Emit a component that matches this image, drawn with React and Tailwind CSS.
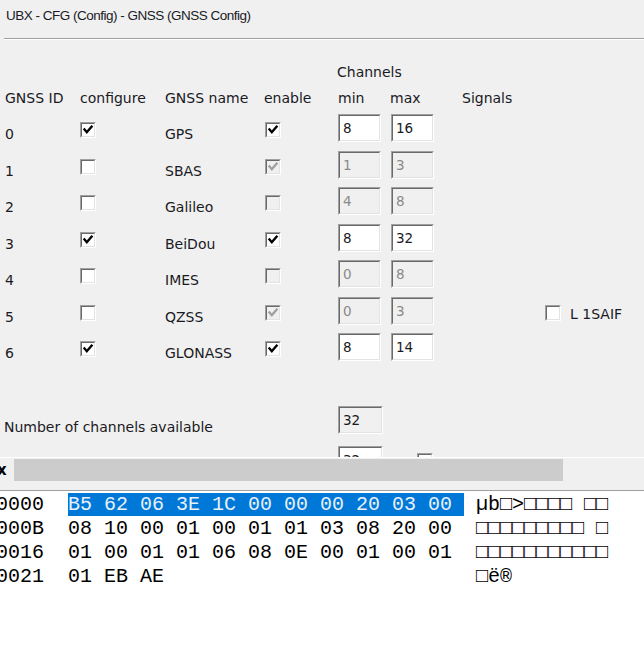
import React from "react";

function Check({ checked = false, disabled = false }) {
  return (
    <div className="w-[16px] h-[16px] border border-t-[#a0a0a0] border-l-[#a0a0a0] border-b-white border-r-white">
      <div
        className={
          "w-full h-full border border-t-[#696969] border-l-[#696969] border-b-[#e3e3e3] border-r-[#e3e3e3] flex items-center justify-center " +
          (disabled ? "bg-[#f0f0f0]" : "bg-white")
        }
      >
        {checked && (
          <svg width="12" height="12" viewBox="0 0 12 12">
            <path
              d="M2.5 5.5 L4.8 8.2 L9.6 2.6"
              fill="none"
              stroke={disabled ? "#a0a0a0" : "#000"}
              strokeWidth="2.4"
              strokeLinecap="square"
            />
          </svg>
        )}
      </div>
    </div>
  );
}

function Box({ value, disabled = false, readOnly = false, w = "w-[43px]" }) {
  return (
    <div className={w + " h-[28px] border border-t-[#a0a0a0] border-l-[#a0a0a0] border-b-white border-r-white"}>
      <div
        className={
          "w-full h-full border border-t-[#696969] border-l-[#696969] border-b-[#e3e3e3] border-r-[#e3e3e3] pl-[3px] text-[13.5px] leading-[24px] " +
          (disabled
            ? "bg-[#f0f0f0] text-[#8a8a8a]"
            : readOnly
            ? "bg-[#f0f0f0] text-[#1a1a24]"
            : "bg-white text-[#1a1a24]")
        }
      >
        {value}
      </div>
    </div>
  );
}

const rows = [
  { id: "0", cfg: true, name: "GPS", en: true, enDis: false, min: "8", max: "16", dis: false },
  { id: "1", cfg: false, name: "SBAS", en: true, enDis: true, min: "1", max: "3", dis: true },
  { id: "2", cfg: false, name: "Galileo", en: false, enDis: true, min: "4", max: "8", dis: true },
  { id: "3", cfg: true, name: "BeiDou", en: true, enDis: false, min: "8", max: "32", dis: false },
  { id: "4", cfg: false, name: "IMES", en: false, enDis: true, min: "0", max: "8", dis: true },
  { id: "5", cfg: false, name: "QZSS", en: true, enDis: true, min: "0", max: "3", dis: true, sig: true },
  { id: "6", cfg: true, name: "GLONASS", en: true, enDis: false, min: "8", max: "14", dis: false },
];

const hexRows = [
  { addr: "0000", hex: "B5 62 06 3E 1C 00 00 00 20 03 00 ", ascii: "µb□>□□□□ □□", sel: true },
  { addr: "000B", hex: "08 10 00 01 00 01 01 03 08 20 00 ", ascii: "□□□□□□□□□ □" },
  { addr: "0016", hex: "01 00 01 01 06 08 0E 00 01 00 01 ", ascii: "□□□□□□□□□□□" },
  { addr: "0021", hex: "01 EB AE                         ", ascii: "□ë®" },
];

export default function App() {
  return (
    <div className="w-[644px] h-[672px] overflow-hidden bg-[#f0f0f0] font-['DejaVu_Sans',Verdana,sans-serif] text-[#1a1a24]">
      <div className="h-[457px] overflow-hidden">
        <div className="h-[38px] pt-[8px] pl-[6px] text-[13.5px] leading-[16px] tracking-[-0.5px] font-['Liberation_Sans',Arial,sans-serif]">
          UBX - CFG (Config) - GNSS (GNSS Config)
        </div>
        <div className="ml-[4px] border-t border-t-[#a0a0a0] border-b border-b-white" />
        <div className="mt-[24px] pl-[337px] text-[14px] leading-[16px]">Channels</div>
        <div className="mt-[10px] flex text-[14px] leading-[16px]">
          <div className="w-[80px] pl-[5px]">GNSS ID</div>
          <div className="w-[85px]">configure</div>
          <div className="w-[99px]">GNSS name</div>
          <div className="w-[74px]">enable</div>
          <div className="w-[52px]">min</div>
          <div className="w-[72px]">max</div>
          <div>Signals</div>
        </div>
        <div className="mt-[8px]">
          {rows.map((r) => (
            <div key={r.id} className="h-[36.5px] flex items-start text-[14px] leading-[16px]">
              <div className="w-[80px] pl-[5px] mt-[12px]">{r.id}</div>
              <div className="w-[85px] mt-[8px]">
                <Check checked={r.cfg} />
              </div>
              <div className="w-[100px] mt-[12px]">{r.name}</div>
              <div className="w-[73px] mt-[8px]">
                <Check checked={r.en} disabled={r.enDis} />
              </div>
              <div className="w-[53px]">
                <Box value={r.min} disabled={r.dis} />
              </div>
              <div className="w-[71px]">
                <Box value={r.max} disabled={r.dis} />
              </div>
              {r.sig && (
                <div className="ml-[83px] mt-[8px] flex items-start gap-[9px]">
                  <Check />
                  <span className="mt-[1px]">L 1SAIF</span>
                </div>
              )}
            </div>
          ))}
        </div>
        <div className="mt-[36.5px] flex items-start">
          <div className="w-[338px] pl-[4px] mt-[13px] text-[14px] leading-[16px]">
            Number of channels available
          </div>
          <Box value="32" readOnly w="w-[45px]" />
        </div>
        <div className="mt-[11px] flex items-start">
          <div className="w-[338px]" />
          <Box value="32" w="w-[45px]" />
          <div className="ml-[34px] mt-[7px]">
            <Check />
          </div>
        </div>
      </div>
      <div className="border-t border-t-white h-[33px] flex items-start pt-[1px]">
        <div className="w-[14px] -ml-[3px] text-[15px] leading-[22px] font-bold text-black">x</div>
        <div className="w-[549px] h-[22px] bg-[#cccccc] ml-[3px]" />
      </div>
      <div className="border-t border-t-[#a0a0a0] bg-white h-[200px] pt-[2px] font-['Liberation_Mono','DejaVu_Sans_Mono',monospace] text-[20px] leading-[24px] text-black">
        {hexRows.map((r) => (
          <div key={r.addr} className="h-[24px] whitespace-pre -ml-[4px]">
            <span>{r.addr + "  "}</span>
            <span className={r.sel ? "bg-[#0078d7] text-[#e8f0fa]" : ""}>{r.hex}</span>
            <span>{" " + r.ascii}</span>
          </div>
        ))}
      </div>
    </div>
  );
}
